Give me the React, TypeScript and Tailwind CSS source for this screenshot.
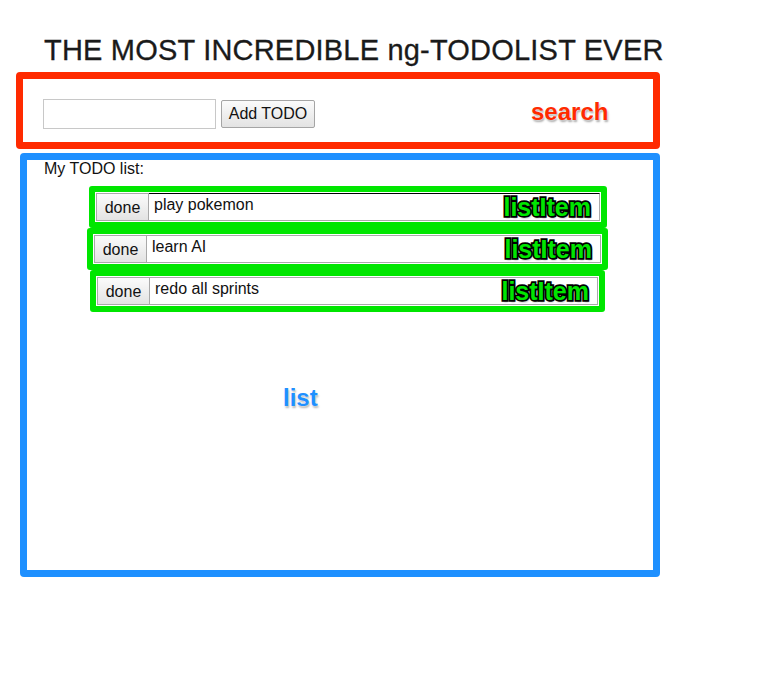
import React from "react";

const items = [
  { text: "play pokemon", ml: "ml-[62px]", w: "w-[518px]", top: "border-t-black" },
  { text: "learn AI", ml: "ml-[60px]", w: "w-[521px]", top: "border-t-[#a9a9a9]" },
  { text: "redo all sprints", ml: "ml-[63px]", w: "w-[515px]", top: "border-t-[#a9a9a9]" },
];

export default function App() {
  return (
    <div className="w-[770px] h-[680px] bg-white pt-[36px] text-[#111] font-['Liberation_Sans',Arial,sans-serif]">
      <h1 className="ml-[44px] text-[29px] leading-[28px] tracking-[0.2px] text-[#1a1a1a] font-normal [-webkit-text-stroke:0.3px_#1a1a1a]">
        THE MOST INCREDIBLE ng-TODOLIST EVER
      </h1>

      <div className="ml-[16px] mt-[8px] w-[644px] h-[77px] border-[7px] border-[#ff2a00] rounded-[4px] flex items-center pl-[20px] pt-[7px]">
        <div className="flex items-center h-[30px]">
          <input className="w-[173px] h-[30px] border border-[#c8c8c8] bg-white outline-none" />
          <button className="ml-[5px] w-[94px] h-[28px] border border-[#a5a5a5] bg-gradient-to-b from-[#fbfbfb] to-[#e3e3e3] text-[16px] text-[#111] rounded-[2px]">
            Add TODO
          </button>
        </div>
        <span className="ml-[216px] -mt-[4px] text-[24px] font-bold text-[#ff2a00] leading-none [text-shadow:0_0_2px_#fff,1px_2px_2px_rgba(0,0,0,0.35)]">
          search
        </span>
      </div>

      <div className="ml-[20px] mt-[4px] w-[640px] h-[424px] border-[7px] border-[#1e90ff] rounded-[4px]">
        <p className="pl-[17px] text-[16px] leading-[18px] text-[#111]">My TODO list:</p>
        <div className="mt-[8px] flex flex-col">
          {items.map((it) => (
            <div
              key={it.text}
              className={`${it.ml} ${it.w} h-[42px] border-[6px] border-[#00e600] rounded-[3px] p-[1px] flex`}
            >
              <button className="w-[53px] h-[28px] border border-[#a9a9a9] bg-gradient-to-b from-[#fbfbfb] to-[#e3e3e3] text-[16px] text-[#111] pt-[2px] shrink-0">
                done
              </button>
              <div
                className={`flex-1 h-[28px] border border-[#a9a9a9] border-l-0 ${it.top} bg-white flex items-center pl-[5px] pr-[8px]`}
              >
                <span className="text-[16px] leading-[18px] text-[#111] -mt-[4px]">{it.text}</span>
                <span className="ml-auto text-[25px] font-bold leading-none text-[#00e600] [-webkit-text-stroke:3.5px_#000] [paint-order:stroke_fill] [text-shadow:1px_2px_2px_rgba(0,0,0,0.4)]">
                  listItem
                </span>
              </div>
            </div>
          ))}
        </div>
        <div className="mt-[74px] pl-[256px]">
          <span className="text-[24px] font-bold leading-[24px] text-[#1e90ff] [text-shadow:0_0_2px_#fff,1px_2px_2px_rgba(0,0,0,0.3)]">
            list
          </span>
        </div>
      </div>
    </div>
  );
}
